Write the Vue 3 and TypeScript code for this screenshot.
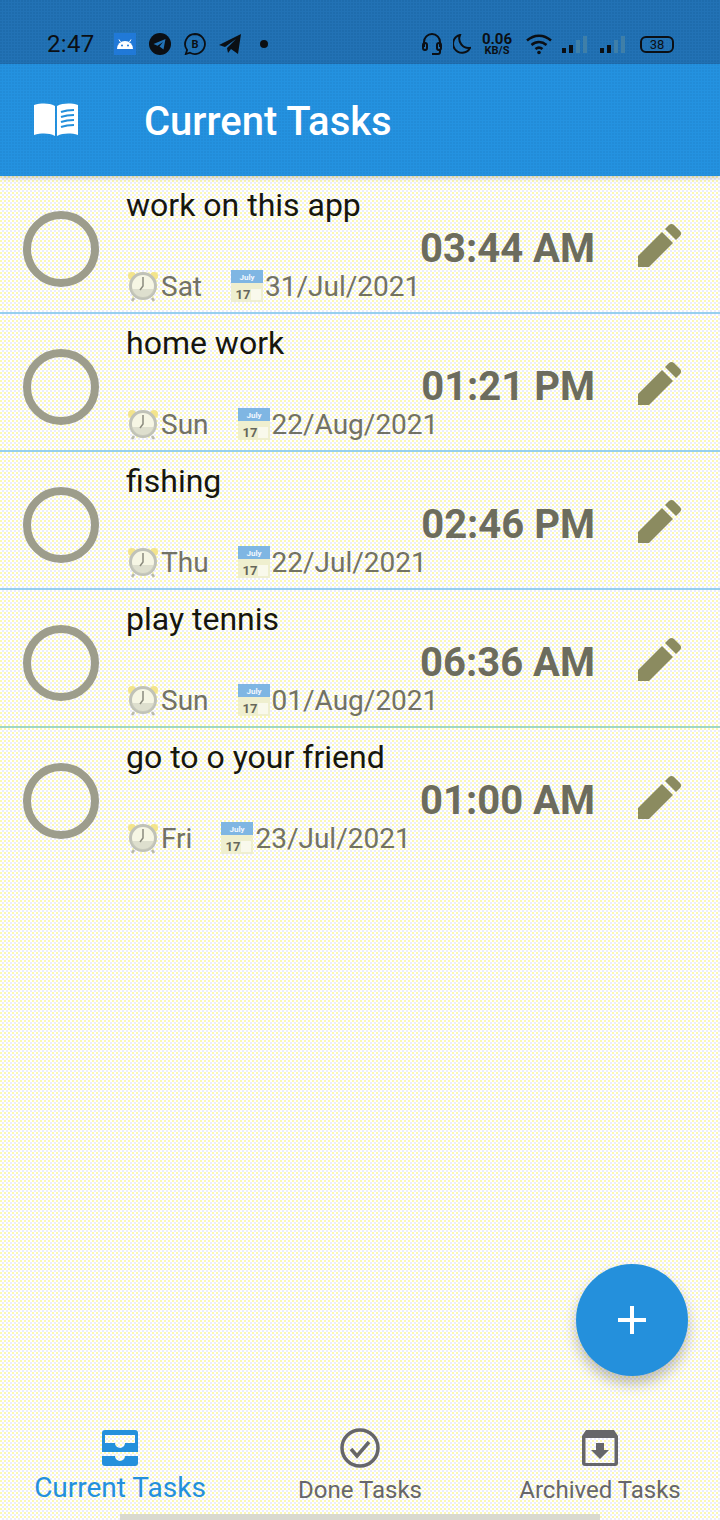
<template>
  <div class="page">
    <div class="status-bar">
      <div class="status-left">
        <span class="clock">2:47</span>
        <span class="android">
          <svg width="16" height="10" viewBox="0 0 16 10"><path d="M0 10a8 8 0 0 1 16 0z" fill="#fff" /><path d="M3.500 3 2 .5M12.500 3 14 .5" stroke="#fff" stroke-width="1" /><circle cx="5" cy="6.500" r="1" fill="#2079d8" /><circle cx="11" cy="6.500" r="1" fill="#2079d8" /></svg>
        </span>
        <svg class="notif" width="22" height="22" viewBox="0 0 22 22"><circle cx="11" cy="11" r="11" fill="#0b0f14" /><path d="M4.500 11 16.500 6 14.500 16.500 10.500 13.500 14 9 8.500 12.800z" fill="#2272b5" /></svg>
        <svg class="notif" width="22" height="22" viewBox="0 0 22 22"><path d="M11 1a10 10 0 1 1-5 18.700L1.800 21l1.300-4A10 10 0 0 1 11 1z" fill="none" stroke="#0b0f14" stroke-width="1.800" /><text x="11" y="15" class="b-mark">B</text></svg>
        <svg class="notif" width="22" height="20" viewBox="0 0 22 20"><path d="M0 11 22 0 19 20 12 15 9 19 8 14 17 5 6 13z" fill="#0b0f14" /></svg>
        <span class="dot"></span>
      </div>
      <div class="status-right">
        <svg width="20" height="24" viewBox="0 0 20 24" fill="none" stroke="#0b0f14" stroke-width="2"><path d="M2 15V10a8 8 0 0 1 16 0v5" /><rect x="1" y="11" width="4" height="7" rx="2" /><rect x="15" y="11" width="4" height="7" rx="2" /><path d="M18 18v2a2 2 0 0 1-2 2h-6" /></svg>
        <svg class="moon" width="18" height="20" viewBox="0 0 18 20"><path d="M7 1a9 9 0 1 0 10 13A9.500 9.500 0 0 1 7 1z" fill="none" stroke="#0b0f14" stroke-width="2" /></svg>
        <div class="speed"><span>0.06</span><span class="unit">KB/S</span></div>
        <svg class="wifi" width="28" height="22" viewBox="0 0 28 22" fill="none" stroke="#0b0f14" stroke-width="2.500"><path d="M1 7.500c7-6.500 17-6.500 24 0M5.500 12c4.500-4 10.500-4 15 0M9.500 16c2.500-2 4.500-2 7 0" /><circle cx="13" cy="19.500" r="1.800" fill="#0b0f14" stroke="none" /></svg>
        <div v-for="n in 2" :key="n" class="signal">
          <i v-for="(h, j) in [5, 8, 13, 17]" :key="j" :class="{ off: j > 1 }" :style="{ height: h + 'px' }"></i>
        </div>
        <div class="battery"><span>38</span></div>
      </div>
    </div>

    <header class="app-bar">
      <svg class="book" width="46" height="34" viewBox="0 0 46 34">
        <path d="M1 2c8-2 15-2 21 1v30c-6-3-13-3-21-1z" fill="#fff" />
        <path d="M45 2c-7-2-15-2-21 1v30c6-3 14-3 21-1z" fill="#fff" />
        <path d="M28 9c4-1.500 8-2 13-2M28 14c4-1.500 8-2 13-2M28 19c4-1.500 8-2 13-2M28 24c4-1.500 8-2 13-2" stroke="#2490dc" stroke-width="2" />
      </svg>
      <h1>Current Tasks</h1>
    </header>

    <main class="task-list">
      <div v-for="(task, i) in tasks" :key="task.title" class="task" :class="{ last: i === tasks.length - 1 }">
        <div class="check"></div>
        <div class="body">
          <div class="title">{{ task.title }}</div>
          <div class="time">{{ task.time }}</div>
          <div class="meta">
            <svg class="alarm" width="32" height="32" viewBox="0 0 32 32">
              <circle cx="5" cy="6" r="4" fill="#f3e48c" />
              <circle cx="27" cy="6" r="4" fill="#f3e48c" />
              <path d="M7 28l-2 3M25 28l2 3" stroke="#b9baaa" stroke-width="2.500" />
              <circle cx="16" cy="16" r="12.500" fill="#f6f6e4" stroke="#c0c2b8" stroke-width="3" />
              <path d="M4 19a12.500 12.500 0 0 0 24 0z" fill="#cfd0c0" opacity="0.6" />
              <path d="M16 7v9l-3 4" fill="none" stroke="#8b8b7e" stroke-width="1.500" />
            </svg>
            <span class="day">{{ task.day }}</span>
            <svg class="cal" width="32" height="32" viewBox="0 0 32 32">
              <rect y="0" width="32" height="13" fill="#7fb6e3" />
              <rect y="13" width="32" height="19" fill="#efefcf" />
              <rect x="20" y="19" width="10" height="11" fill="#f9f9ec" />
              <text x="16" y="10" class="cal-month">July</text>
              <text x="12" y="29" class="cal-day">17</text>
            </svg>
            <span class="date">{{ task.date }}</span>
          </div>
        </div>
        <svg class="edit" width="44" height="44" viewBox="0 0 44 44">
          <path d="M0 44V33L24 9l11 11L11 44z" fill="#8b8b60" />
          <path d="M27 6l4-4c1.500-1.500 3.500-1.500 5 0l6 6c1.500 1.500 1.500 3.500 0 5l-4 4z" fill="#8b8b60" />
        </svg>
      </div>
    </main>

    <button class="fab" type="button">
      <svg width="28" height="28" viewBox="0 0 28 28"><path d="M12 0h4v12h12v4H16v12h-4V16H0v-4h12z" fill="#fff" /></svg>
    </button>

    <nav class="bottom-nav">
      <div class="nav-item active">
        <span class="nav-icon">
          <svg width="36" height="36" viewBox="0 0 36 36">
            <path fill-rule="evenodd" d="M3 0h30a3 3 0 0 1 3 3v19H0V3a3 3 0 0 1 3-3zM3 5v8h10a5 5 0 0 0 10 0h10V5z" fill="#2490dc" />
            <path d="M0 26h13a5 5 0 0 0 10 0h13v7a3 3 0 0 1-3 3H3a3 3 0 0 1-3-3z" fill="#2490dc" />
          </svg>
        </span>
        <span>Current Tasks</span>
      </div>
      <div class="nav-item">
        <span class="nav-icon">
          <svg width="40" height="40" viewBox="0 0 40 40" fill="none" stroke="#66666a" stroke-width="3.500"><circle cx="20" cy="20" r="18" /><path d="M11 21l6 7 12-14" /></svg>
        </span>
        <span>Done Tasks</span>
      </div>
      <div class="nav-item">
        <span class="nav-icon">
          <svg width="36" height="36" viewBox="0 0 36 36">
            <path fill-rule="evenodd" d="M4 0h28l4 6v27a3 3 0 0 1-3 3H3a3 3 0 0 1-3-3V6zM3.500 8v25h29V8z" fill="#66666a" />
            <path d="M14 13h8v7h5l-9 9-9-9h5z" fill="#66666a" />
          </svg>
        </span>
        <span>Archived Tasks</span>
      </div>
    </nav>
    <div class="home-indicator"></div>
  </div>
</template>

<script setup lang="ts">
interface Task {
  title: string
  time: string
  day: string
  date: string
}

const tasks: Task[] = [
  { title: 'work on this app', time: '03:44 AM', day: 'Sat', date: '31/Jul/2021' },
  { title: 'home work', time: '01:21 PM', day: 'Sun', date: '22/Aug/2021' },
  { title: 'fishing', time: '02:46 PM', day: 'Thu', date: '22/Jul/2021' },
  { title: 'play tennis', time: '06:36 AM', day: 'Sun', date: '01/Aug/2021' },
  { title: 'go to o your friend', time: '01:00 AM', day: 'Fri', date: '23/Jul/2021' }
]
</script>

<style>
html,
body {
  margin: 0;
  background: #fdfdf0;
}
</style>

<style scoped>
.page {
  position: relative;
  width: 720px;
  height: 1520px;
  overflow: hidden;
  display: flex;
  flex-direction: column;
  font-family: Roboto, "Liberation Sans", sans-serif;
  background-color: #ffffff;
  background-image:
    radial-gradient(circle at 1px 1px, #fbf8b4 0.9px, transparent 1px),
    radial-gradient(circle at 3px 3px, #ecedfb 0.9px, transparent 1px);
  background-size: 4px 4px;
}

.status-bar {
  height: 64px;
  flex: none;
  box-sizing: border-box;
  padding: 24px 46px 0 47px;
  display: flex;
  align-items: center;
  justify-content: space-between;
  background-color: #2272b5;
  background-image: radial-gradient(circle at 1px 1px, #1e6cad 0.9px, transparent 1px);
  background-size: 3px 3px;
  color: #0b0f14;
}

.status-left,
.status-right {
  display: flex;
  align-items: center;
}

.clock {
  font-size: 24px;
  width: 67px;
  letter-spacing: 0.3px;
}

.android {
  width: 22px;
  height: 22px;
  display: flex;
  align-items: center;
  justify-content: center;
  background: #2079d8;
}

.notif {
  margin-left: 13px;
}

.b-mark {
  font-size: 11px;
  font-weight: 700;
  text-anchor: middle;
  fill: #0b0f14;
}

.dot {
  width: 8px;
  height: 8px;
  margin-left: 19px;
  border-radius: 50%;
  background: #0b0f14;
}

.moon {
  margin-left: 11px;
}

.speed {
  margin-left: 9px;
  width: 34px;
  display: flex;
  flex-direction: column;
  align-items: center;
  font-size: 15px;
  font-weight: 700;
  line-height: 12px;
}

.unit {
  font-size: 11px;
  line-height: 11px;
}

.wifi {
  margin-left: 12px;
}

.signal {
  margin-left: 8px;
  width: 30px;
  height: 18px;
  display: flex;
  align-items: flex-end;
  gap: 3px;
}

.signal i {
  width: 4px;
  background: #0b0f14;
}

.signal i.off {
  background: #3f7fa8;
}

.battery {
  margin-left: 10px;
  width: 34px;
  height: 17px;
  box-sizing: border-box;
  border: 2px solid #0b0f14;
  border-radius: 6px;
  font-size: 13px;
  line-height: 13px;
  text-align: center;
}

.app-bar {
  height: 112px;
  flex: none;
  position: relative;
  z-index: 1;
  box-sizing: border-box;
  padding-left: 33px;
  display: flex;
  align-items: center;
  background-color: #2492e0;
  background-image: radial-gradient(circle at 1px 1px, #228cd8 0.9px, transparent 1px);
  background-size: 3px 3px;
  box-shadow: 0 2px 5px rgba(0, 0, 0, 0.2);
}

.app-bar h1 {
  margin: 2px 0 0 65px;
  font-size: 40px;
  font-weight: 500;
  color: #fff;
}

.task-list {
  flex: 1;
}

.task {
  height: 138px;
  box-sizing: border-box;
  padding-left: 23px;
  display: flex;
  border-bottom: 2px solid #96cfee;
}

.task.last {
  border-bottom: 0;
}

.task:nth-child(4) {
  border-bottom-color: #9ed6c6;
}

.check {
  width: 76px;
  height: 76px;
  margin-top: 35px;
  flex: none;
  box-sizing: border-box;
  border: 8px solid #9d9d8c;
  border-radius: 50%;
}

.body {
  width: 469px;
  margin-left: 27px;
  flex: none;
}

.title {
  height: 34px;
  margin-top: 12px;
  font-size: 32px;
  line-height: 34px;
  color: #16160f;
}

.time {
  height: 42px;
  margin-top: 6px;
  font-size: 40px;
  font-weight: 700;
  line-height: 42px;
  text-align: right;
  color: #6c6c5e;
}

.meta {
  height: 32px;
  display: flex;
  align-items: center;
  font-size: 28px;
  color: #727265;
}

.alarm {
  flex: none;
  margin-left: 1px;
  margin-right: 2px;
}

.cal {
  flex: none;
  margin-left: 29px;
  margin-right: 2px;
}

.cal-month {
  font-size: 8px;
  font-weight: 700;
  text-anchor: middle;
  fill: #f2f8ff;
}

.cal-day {
  font-size: 13px;
  font-weight: 700;
  text-anchor: middle;
  fill: #66665a;
}

.edit {
  margin: 47px 0 0 43px;
  flex: none;
}

.fab {
  position: absolute;
  left: 576px;
  top: 1264px;
  width: 112px;
  height: 112px;
  padding: 0;
  border: 0;
  border-radius: 50%;
  display: flex;
  align-items: center;
  justify-content: center;
  background: #2490dc;
  box-shadow: 0 8px 14px rgba(0, 0, 0, 0.25);
}

.bottom-nav {
  height: 112px;
  flex: none;
  display: grid;
  grid-template-columns: repeat(3, 240px);
}

.nav-item {
  display: flex;
  flex-direction: column;
  align-items: center;
  padding-top: 20px;
  gap: 7px;
  font-size: 24px;
  line-height: 30px;
  color: #66666a;
}

.nav-icon {
  height: 40px;
  display: flex;
  align-items: center;
}

.nav-item.active {
  gap: 2px;
  font-size: 28px;
  line-height: 36px;
  color: #2490dc;
}

.home-indicator {
  position: absolute;
  left: 120px;
  bottom: 0;
  width: 480px;
  height: 6px;
  background: #d9d9cf;
}
</style>
